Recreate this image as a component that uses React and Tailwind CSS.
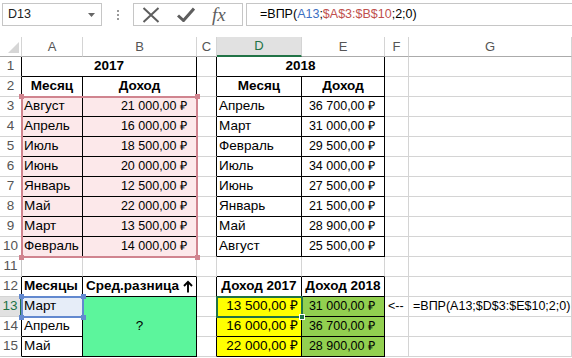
import React from "react";

const BR = {
  g: "border-r-[#d4d4d4]",
  k: "border-r-black",
  h: "border-r-[#c6c6c6]",
  G: "border-r-[#217346]",
};
const BB = {
  g: "border-b-[#d4d4d4]",
  k: "border-b-black",
  h: "border-b-[#ababab]",
};

function Cell({ r = "g", b = "g", className = "", children }) {
  return (
    <div
      className={`flex items-center whitespace-nowrap border-r border-b ${BR[r]} ${BB[b]} ${className}`}
    >
      {children}
    </div>
  );
}

function RH({ n, r = "k", sel = false }) {
  return (
    <div
      className={`flex items-center justify-center border-b border-b-[#d4d4d4] text-[13.5px] ${
        sel
          ? "border-r-2 border-r-[#217346] bg-[#e1e1e1] text-[#217346]"
          : `border-r ${BR[r]} bg-white text-[#555]`
      }`}
    >
      {n}
    </div>
  );
}

function CH({ children, sel = false }) {
  return (
    <div
      className={`flex items-center justify-center border-r border-r-[#d4d4d4] text-[13px] ${
        sel
          ? "border-b-2 border-b-[#217346] bg-[#e1e1e1] text-[#217346]"
          : "border-b border-b-[#ababab] bg-white text-[#555]"
      }`}
    >
      {children}
    </div>
  );
}

const t2017 = [
  ["Август", "21 000,00 ₽"],
  ["Апрель", "16 000,00 ₽"],
  ["Июль", "18 500,00 ₽"],
  ["Июнь", "20 000,00 ₽"],
  ["Январь", "12 500,00 ₽"],
  ["Май", "22 000,00 ₽"],
  ["Март", "13 500,00 ₽"],
  ["Февраль", "14 000,00 ₽"],
];
const t2018 = [
  ["Апрель", "36 700,00 ₽"],
  ["Март", "31 000,00 ₽"],
  ["Февраль", "29 500,00 ₽"],
  ["Июль", "34 000,00 ₽"],
  ["Июнь", "27 500,00 ₽"],
  ["Январь", "21 500,00 ₽"],
  ["Май", "28 900,00 ₽"],
  ["Август", "25 500,00 ₽"],
];

function Sq({ className }) {
  return <div className={`absolute h-[5px] w-[5px] ${className}`} />;
}

export default function App() {
  return (
    <div className="h-[358px] w-[572px] overflow-hidden bg-white font-['Liberation_Sans',Arial,sans-serif] text-[13.5px] text-black">
      {/* Formula bar */}
      <div className="flex h-[37px] items-start pt-[3px] text-[12.5px]">
        <div className="ml-[2px] flex h-[23px] w-[100px] items-center justify-between border border-[#c6c6c6] pl-[5px] pr-[6px]">
          <span className="text-[#222]">D13</span>
          <svg width="7" height="4" viewBox="0 0 7 4">
            <path d="M0 0 L7 0 L3.5 4 Z" fill="#666" />
          </svg>
        </div>
        <div className="flex h-[23px] w-[31px] flex-col items-center justify-center gap-[2px]">
          <div className="h-[2px] w-[2px] bg-[#9a9a9a]" />
          <div className="h-[2px] w-[2px] bg-[#9a9a9a]" />
          <div className="h-[2px] w-[2px] bg-[#9a9a9a]" />
        </div>
        <div className="flex h-[23px] w-[110px] items-center border border-[#c6c6c6]">
          <div className="ml-[8px] flex w-[18px] justify-center">
            <svg width="18" height="16" viewBox="0 0 18 16">
              <path d="M1.5 1 L16.5 15 M16.5 1 L1.5 15" stroke="#5e5e5e" strokeWidth="2" fill="none" />
            </svg>
          </div>
          <div className="ml-[17px] flex w-[18px] justify-center">
            <svg width="18" height="15" viewBox="0 0 18 15">
              <path d="M1 8.5 L6.5 13.5 L17 1.5" stroke="#5e5e5e" strokeWidth="3" fill="none" />
            </svg>
          </div>
          <div className="ml-[17px] font-['Liberation_Serif',serif] text-[19px] italic leading-none text-[#5e5e5e]">
            fx
          </div>
        </div>
        <div className="ml-[3px] flex h-[23px] flex-1 items-center border-y border-l border-[#c6c6c6] pl-[13px]">
          <span>=ВПР(</span>
          <span className="text-[#3d6fc2]">A13</span>
          <span>;</span>
          <span className="text-[#c0504d]">$A$3:$B$10</span>
          <span>;2;0)</span>
        </div>
      </div>

      {/* Sheet */}
      <div className="relative grid grid-cols-[22px_61px_114px_20px_85px_83px_24px_163px] grid-rows-[repeat(16,20px)]">
        {/* column headers */}
        <div className="relative border-r border-b border-r-[#d4d4d4] border-b-[#ababab] bg-white">
          <svg className="absolute right-[2px] bottom-[3px]" width="11" height="11" viewBox="0 0 11 11">
            <path d="M11 0 L11 11 L0 11 Z" fill="#d6d6d6" />
          </svg>
        </div>
        <CH>A</CH>
        <CH>B</CH>
        <CH>C</CH>
        <CH sel>D</CH>
        <CH>E</CH>
        <CH>F</CH>
        <CH>G</CH>

        {/* row 1 */}
        <RH n="1" />
        <Cell r="k" b="k" className="col-span-2 justify-center font-bold">2017</Cell>
        <Cell r="k" />
        <Cell r="k" b="k" className="col-span-2 justify-center font-bold">2018</Cell>
        <Cell />
        <Cell />

        {/* row 2 */}
        <RH n="2" />
        <Cell r="k" b="k" className="justify-center font-bold">Месяц</Cell>
        <Cell r="k" b="k" className="justify-center font-bold">Доход</Cell>
        <Cell r="k" />
        <Cell r="k" b="k" className="justify-center font-bold">Месяц</Cell>
        <Cell r="k" b="k" className="justify-center font-bold">Доход</Cell>
        <Cell />
        <Cell />

        {/* rows 3-10 */}
        {t2017.map((row, i) => (
          <React.Fragment key={i}>
            <RH n={String(i + 3)} />
            <Cell r="k" b="k" className="bg-[#fce8ea] pl-[2px]">{row[0]}</Cell>
            <Cell r="k" b="k" className="justify-end bg-[#fce8ea] pr-[9px] text-[12.5px]">{row[1]}</Cell>
            <Cell r="k" />
            <Cell r="k" b="k" className="pl-[2px]">{t2018[i][0]}</Cell>
            <Cell r="k" b="k" className="justify-end pr-[9px] text-[12.5px]">{t2018[i][1]}</Cell>
            <Cell />
            <Cell />
          </React.Fragment>
        ))}

        {/* row 11 */}
        <RH n="11" r="h" />
        <Cell b="k" />
        <Cell b="k" />
        <Cell />
        <Cell b="k" />
        <Cell b="k" />
        <Cell />
        <Cell />

        {/* row 12 */}
        <RH n="12" />
        <Cell r="k" b="k" className="pl-[2px] font-bold">Месяцы</Cell>
        <Cell r="k" b="k" className="justify-center gap-[4px] font-bold">
          <span>Сред.разница</span>
          <svg width="10" height="13" viewBox="0 0 10 13">
            <path d="M5 12.5 V1.8 M1 6 L5 1.8 L9 6" stroke="#000" strokeWidth="1.9" fill="none" />
          </svg>
        </Cell>
        <Cell r="k" />
        <Cell r="k" b="k" className="justify-center font-bold">Доход 2017</Cell>
        <Cell r="k" b="k" className="justify-center font-bold">Доход 2018</Cell>
        <Cell />
        <Cell />

        {/* row 13 */}
        <RH n="13" sel />
        <Cell r="k" b="k" className="bg-[#e6edf8] pl-[2px]">Март</Cell>
        <Cell r="k" b="k" className="row-span-3 justify-center bg-[#5cf59c]">?</Cell>
        <Cell r="k" />
        <Cell r="k" b="k" className="justify-end bg-[#ffff00] pr-[3px] text-[13.5px]">13 500,00 ₽</Cell>
        <Cell r="k" b="k" className="justify-end bg-[#92d050] pr-[9px] text-[12.5px]">31 000,00 ₽</Cell>
        <Cell className="pl-[3px] text-[12.5px]">&lt;--</Cell>
        <Cell className="pl-[4px] text-[12.5px]">=ВПР(A13;$D$3:$E$10;2;0)</Cell>

        {/* row 14 */}
        <RH n="14" />
        <Cell r="k" b="k" className="pl-[2px]">Апрель</Cell>
        <Cell r="k" />
        <Cell r="k" b="k" className="justify-end bg-[#ffff00] pr-[3px] text-[13.5px]">16 000,00 ₽</Cell>
        <Cell r="k" b="k" className="justify-end bg-[#92d050] pr-[9px] text-[12.5px]">36 700,00 ₽</Cell>
        <Cell />
        <Cell />

        {/* row 15 */}
        <RH n="15" />
        <Cell r="k" b="k" className="pl-[2px]">Май</Cell>
        <Cell r="k" />
        <Cell r="k" b="k" className="justify-end bg-[#ffff00] pr-[3px] text-[13.5px]">22 000,00 ₽</Cell>
        <Cell r="k" b="k" className="justify-end bg-[#92d050] pr-[9px] text-[12.5px]">28 900,00 ₽</Cell>
        <Cell />
        <Cell />

        {/* pink range highlight A3:B10 */}
        <div className="pointer-events-none absolute left-[21px] top-[59px] h-[162px] w-[177px] border-2 border-[#d0848f]">
          <Sq className="-left-[4px] -top-[4px] bg-[#d0848f]" />
          <Sq className="-right-[4px] -top-[4px] bg-[#d0848f]" />
          <Sq className="-left-[4px] -bottom-[4px] bg-[#d0848f]" />
          <Sq className="-right-[4px] -bottom-[4px] bg-[#d0848f]" />
        </div>

        {/* blue range highlight A13 */}
        <div className="pointer-events-none absolute left-[21px] top-[259px] h-[22px] w-[63px] border-2 border-[#6289cf]">
          <Sq className="-left-[4px] -top-[4px] bg-[#6289cf]" />
          <Sq className="-right-[4px] -top-[4px] bg-[#6289cf]" />
          <Sq className="-left-[4px] -bottom-[4px] bg-[#6289cf]" />
          <Sq className="-right-[4px] -bottom-[4px] bg-[#6289cf]" />
        </div>

        {/* active cell D13 */}
        <div className="pointer-events-none absolute left-[216px] top-[259px] h-[22px] w-[87px] border-2 border-[#217346]">
          <div className="absolute -right-[4px] -bottom-[4px] h-[6px] w-[6px] border border-white bg-[#217346]" />
        </div>
      </div>
    </div>
  );
}
